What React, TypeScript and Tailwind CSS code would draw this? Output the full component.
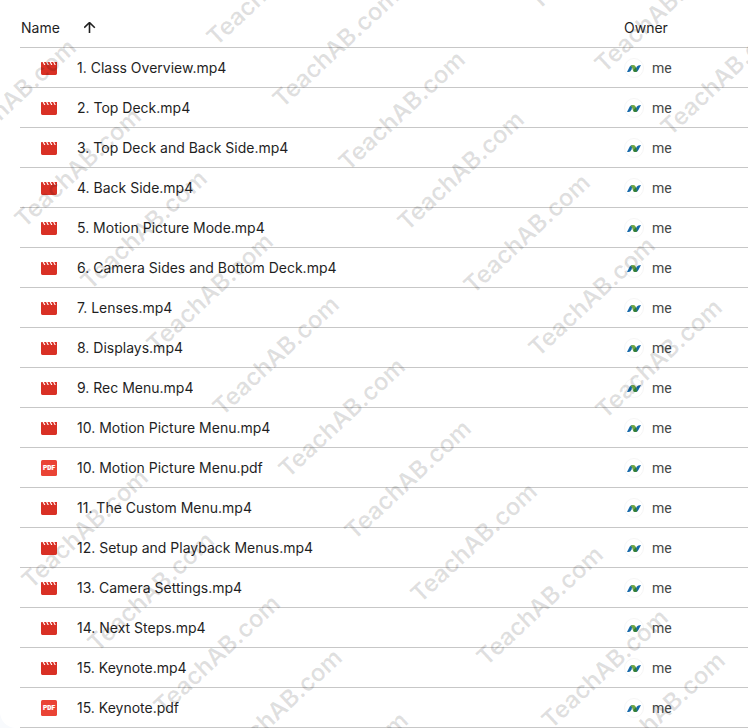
import React from 'react';

interface FileItem {
  name: string;
  type: 'video' | 'pdf';
}

const files: FileItem[] = [
  { name: '1. Class Overview.mp4', type: 'video' },
  { name: '2. Top Deck.mp4', type: 'video' },
  { name: '3. Top Deck and Back Side.mp4', type: 'video' },
  { name: '4. Back Side.mp4', type: 'video' },
  { name: '5. Motion Picture Mode.mp4', type: 'video' },
  { name: '6. Camera Sides and Bottom Deck.mp4', type: 'video' },
  { name: '7. Lenses.mp4', type: 'video' },
  { name: '8. Displays.mp4', type: 'video' },
  { name: '9. Rec Menu.mp4', type: 'video' },
  { name: '10. Motion Picture Menu.mp4', type: 'video' },
  { name: '10. Motion Picture Menu.pdf', type: 'pdf' },
  { name: '11. The Custom Menu.mp4', type: 'video' },
  { name: '12. Setup and Playback Menus.mp4', type: 'video' },
  { name: '13. Camera Settings.mp4', type: 'video' },
  { name: '14. Next Steps.mp4', type: 'video' },
  { name: '15. Keynote.mp4', type: 'video' },
  { name: '15. Keynote.pdf', type: 'pdf' },
];

// centre points of the watermark stamps
const stamps: [number, number][] = [
  [270, -14], [336, 48], [402, 111], [461, 171], [527, 234], [592, 297], [659, 359],
  [592, -50], [658, 13], [724, 76],
  [13, 99], [78, 168], [144, 230], [210, 293], [276, 356], [342, 418], [408, 480], [474, 543], [540, 606], [605, 669], [662, 712],
  [85, 529], [151, 592], [217, 655], [279, 709], [345, 772],
];

const VideoIcon = () => (
  <svg className="block h-[13px] w-4" viewBox="0 0 16 13" aria-hidden="true">
    <path
      fill="#d93025"
      d="M0 .8Q0 0 .8 0H1.6l1.5 3h1.3L2.9 0h2.2l1.5 3h1.3L6.4 0h2.2l1.5 3h1.3L9.9 0h2.2l1.5 3h1.2L13.3 0H16v11.6q0 1.4-1.4 1.4H1.4Q0 13 0 11.6z"
    />
  </svg>
);

const PdfIcon = () => (
  <svg className="block h-4 w-4" viewBox="0 0 16 16" aria-hidden="true">
    <rect width="16" height="16" rx="1.5" fill="#ea4335" />
    <text
      x="8"
      y="10.4"
      textAnchor="middle"
      fontFamily="Roboto, sans-serif"
      fontSize="6.5"
      fontWeight="900"
      fill="#fff"
      stroke="#fff"
      strokeWidth=".2"
    >
      PDF
    </text>
  </svg>
);

const OwnerAvatar = () => (
  <span className="flex h-5 w-5 shrink-0 items-center justify-center rounded-full border border-[#f6f6f6]">
    <svg className="h-[7px] w-[14px]" viewBox="0 0 14 7" aria-hidden="true">
      <path d="M0 7 2.6 1.8Q3.5 0 5.6 0L4.6 4.4Q3.4 7 1.6 7z" fill="#1769aa" />
      <path d="M9 7 8.2 4.4 9.9 1.6Q10.8 0 14 0L11.4 4.9Q10.3 7 9 7z" fill="#1769aa" />
      <path d="M3.6 1.3Q4.4 0 6.2 0 8.2 0 8.7 1.8L10.2 6Q9.4 7 8.2 7 6.5 7 5.9 5.2L5 2.6z" fill="#6da544" />
      <path d="M7.2 4.2 8.8 2.2 10.2 6Q9.4 7 8.2 7 7 7 6.2 5.9z" fill="#2f7d3b" />
    </svg>
  </span>
);

const Watermark = () => (
  <div className="pointer-events-none absolute inset-0 select-none overflow-hidden" aria-hidden="true">
    {stamps.map(([x, y]) => (
      <span
        key={`${x}-${y}`}
        className="absolute -translate-x-1/2 -translate-y-1/2 -rotate-43 whitespace-nowrap font-['Inter',sans-serif] text-2xl font-semibold text-black/12"
        style={{ left: x, top: y }}
      >
        TeachAB.com
      </span>
    ))}
  </div>
);

const App: React.FC = () => {
  return (
    <div className="min-h-screen bg-[#f8fafd]">
      <main className="relative overflow-hidden rounded-bl-2xl bg-white pl-5 font-['Inter',sans-serif] text-sm text-[#1f1f1f]">
        <table className="w-full table-fixed border-separate border-spacing-0">
          <thead>
            <tr className="h-12">
              <th scope="col" className="border-b border-[#c7c7c7] pb-[3px] pl-px text-left align-bottom font-normal">
                <button type="button" className="flex h-8 items-center gap-6">
                  Name
                  <svg className="h-3 w-3" viewBox="0 0 12 12" fill="none" stroke="currentColor" strokeWidth="1.6" aria-hidden="true">
                    <path d="M5.5 11V0M.2 5.8 5.5.5l5.3 5.3" />
                  </svg>
                </button>
              </th>
              <th scope="col" className="w-[124px] border-b border-[#c7c7c7] pb-[3px] text-left align-bottom font-normal">
                <span className="flex h-8 items-center">Owner</span>
              </th>
            </tr>
          </thead>
          <tbody>
            {files.map((file) => (
              <tr key={file.name} className="h-10">
                <td className="border-b border-[#c7c7c7] pl-[21px]">
                  <div className="flex items-center gap-5 pt-px">
                    {file.type === 'video' ? <VideoIcon /> : <PdfIcon />}
                    <span className="truncate">{file.name}</span>
                  </div>
                </td>
                <td className="border-b border-[#c7c7c7]">
                  <div className="flex items-center gap-2 pt-px font-['Roboto',sans-serif] text-[#444746]">
                    <OwnerAvatar />
                    me
                  </div>
                </td>
              </tr>
            ))}
          </tbody>
        </table>
        <Watermark />
      </main>
    </div>
  );
};

export default App;
